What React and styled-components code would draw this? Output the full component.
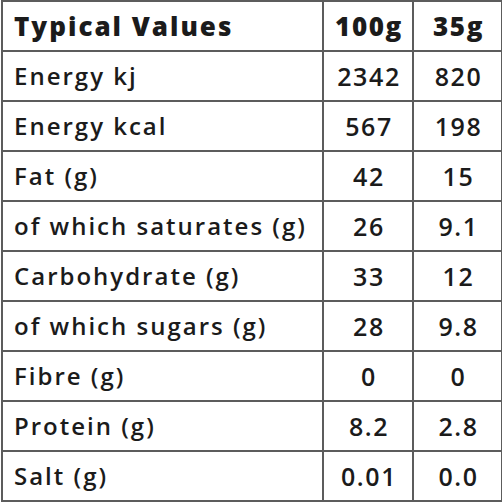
import React from 'react';
import styled, { createGlobalStyle } from 'styled-components';

const GlobalStyle = createGlobalStyle`
  html, body {
    margin: 0;
    padding: 0;
    background: #fff;
  }
`;

const Table = styled.table`
  border-collapse: collapse;
  width: 500px;
  margin: 0 0 0 1px;
  font-family: 'Open Sans', Lato, 'Liberation Sans', sans-serif;
  color: #1b1b1b;
  table-layout: fixed;
`;

// label cells on the left, values centred in the two narrow columns
const Cell = styled.td`
  height: 48px;
  padding: 0 0 0 ${({ $num }) => ($num ? '2px' : '11px')};
  border: 2px solid #5c5c5c;
  text-align: ${({ $num }) => ($num ? 'center' : 'left')};
  vertical-align: middle;
  font-size: ${({ $head, $num }) => ($head ? '26px' : $num ? '25px' : '24px')};
  font-weight: ${({ $head }) => ($head ? 800 : 600)};
  letter-spacing: ${({ $num }) => ($num ? '1.6px' : '2px')};
  white-space: nowrap;
  line-height: 1;
`;

const rows = [
  ['Energy kj', '2342', '820'],
  ['Energy kcal', '567', '198'],
  ['Fat (g)', '42', '15'],
  ['of which saturates (g)', '26', '9.1'],
  ['Carbohydrate (g)', '33', '12'],
  ['of which sugars (g)', '28', '9.8'],
  ['Fibre (g)', '0', '0'],
  ['Protein (g)', '8.2', '2.8'],
  ['Salt (g)', '0.01', '0.0'],
];

const App = () => (
  <>
    <GlobalStyle />
    <Table>
      <colgroup>
        <col style={{ width: 321 }} />
        <col style={{ width: 90 }} />
        <col style={{ width: 89 }} />
      </colgroup>
      <tbody>
        <tr>
          <Cell $head>Typical Values</Cell>
          <Cell $head $num>100g</Cell>
          <Cell $head $num>35g</Cell>
        </tr>
        {rows.map(([label, a, b]) => (
          <tr key={label}>
            <Cell>{label}</Cell>
            <Cell $num>{a}</Cell>
            <Cell $num>{b}</Cell>
          </tr>
        ))}
      </tbody>
    </Table>
  </>
);

export default App;
